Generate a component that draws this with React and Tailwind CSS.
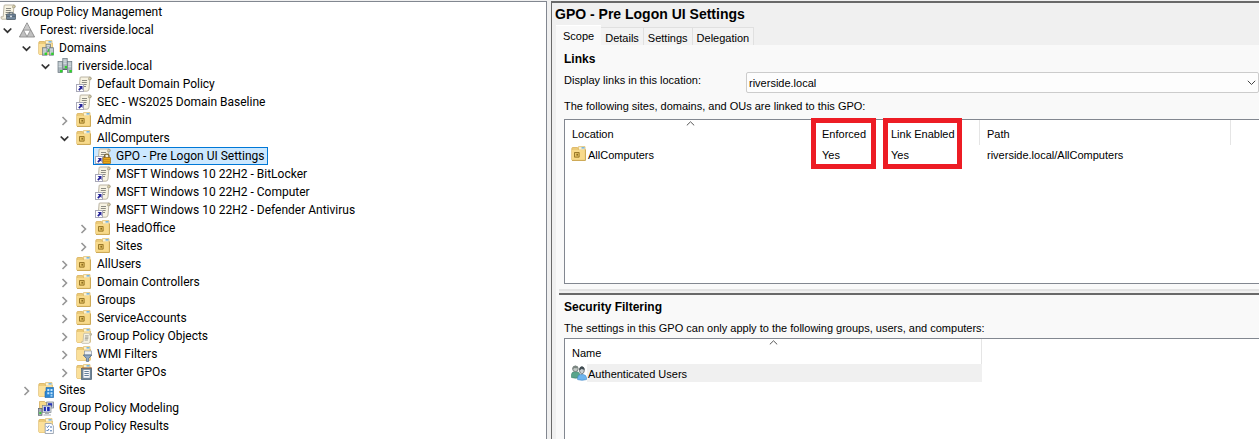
import React, { useState } from "react";

const Svg = ({ children }) => (
  <svg width="16" height="16" viewBox="0 0 16 16" className="block shrink-0" aria-hidden="true">
    {children}
  </svg>
);

const FolderShape = () => (
  <>
    <path d="M.8 2.5 Q.8 1.5 1.8 1.5 H6.5 L7.5 3 H13.5 Q14.5 3 14.5 4 V13.5 Q14.5 14.5 13.5 14.5 H1.8 Q.8 14.5 .8 13.5Z" fill="#eccb79" stroke="#d9b05a" strokeWidth=".8" />
    <path d="M7.5 .6 h6.5 v3.4 h-6.5z" fill="#fdf3d2" stroke="#dcb75f" strokeWidth=".7" />
    <rect x="10.5" y="1.2" width="3" height="1.3" fill="#5aa9e6" />
    <path d="M.9 4 H14.4 V13.4 Q14.4 14.4 13.4 14.4 H1.9 Q.9 14.4 .9 13.4Z" fill="#fbe09a" />
  </>
);

const Scroll = () => (
  <>
    <path d="M4.5 1 H14 Q15.5 1 15.2 3 L13.8 3.6 L13 13 Q12.8 15.2 10.8 15.2 H2 Q.8 15 1 12.8 H3.2 L4 3 Q4 1.5 4.5 1Z" fill="#f7f3e2" stroke="#b3ad9b" strokeWidth=".9" />
    <path d="M13 1.4 Q12.2 2.4 12.6 3.8 L15 3.6 Q15.4 1.2 14 1Z" fill="#d9cfa9" stroke="#8f8973" strokeWidth=".5" />
    <path d="M6 4.5h5M5.8 6.5h5M5.6 8.5h5M5.4 10.5h4.6" stroke="#8b8b83" strokeWidth="1" />
  </>
);

const ShortcutArrow = () => (
  <>
    <rect x=".5" y="8.5" width="7" height="7" fill="#fff" stroke="#a9a9b8" />
    <path d="M2.6 10h3.9v3.9L5.4 12.8l-1.9 1.9-1.3-1.3 1.9-1.9z" fill="#26249a" />
  </>
);

const Tower = ({ x, y, h }) => (
  <>
    <rect x={x} y={y} width="4.4" height={h} fill="#a9b4ba" stroke="#6b7880" strokeWidth=".7" />
    <path d={`M${x + 0.6} ${y + 1.5}h3.2M${x + 0.6} ${y + 3.3}h3.2M${x + 0.6} ${y + 5.1}h3.2`} stroke="#e6edf0" strokeWidth=".8" />
    <rect x={x + 2} y={y + h - 2.6} width="2.4" height="2.4" fill="#2fd32b" />
  </>
);

const icons = {
  console: (
    <Svg>
      <Scroll />
      <rect x="6.5" y="10" width="9" height="5.5" rx=".6" fill="#71869a" stroke="#42515f" strokeWidth=".7" />
      <path d="M9.2 10v-1.6h3.6v1.6M6.7 12.3h8.6" fill="none" stroke="#4b5a68" strokeWidth=".8" />
      <rect x="10.1" y="11.6" width="1.8" height="1.6" fill="#e4e9ee" />
    </Svg>
  ),
  forest: (
    <Svg>
      <path d="M8 .8 15.6 15H.4Z" fill="#a4a4a4" stroke="#808080" strokeWidth=".8" />
      <path d="M8 1.5 11.3 7.8H4.7Z" fill="#c9c9c9" />
      <path d="M4.6 8.2h6.8L8 14.4Z" fill="#fff" stroke="#858585" strokeWidth=".6" />
      <path d="M4.3 8.8 7.2 14.4H1.3ZM11.7 8.8 14.7 14.4H8.8Z" fill="#c0c0c0" />
    </Svg>
  ),
  domains: (
    <Svg>
      <FolderShape />
      <Tower x={8} y={4.2} h={7.5} />
      <Tower x={4.6} y={7.7} h={7.5} />
      <Tower x={11.2} y={7.7} h={7.5} />
    </Svg>
  ),
  domain: (
    <Svg>
      <Tower x={5.8} y={0.6} h={10} />
      <Tower x={1} y={3.6} h={11} />
      <Tower x={10.4} y={3.6} h={11} />
      <path d="M5.8 11.5h4.2" stroke="#59666e" />
    </Svg>
  ),
  gpo: (
    <Svg>
      <Scroll />
      <ShortcutArrow />
    </Svg>
  ),
  gpoLock: (
    <Svg>
      <Scroll />
      <ShortcutArrow />
      <path d="M9.6 10V8q0-1.9 2.2-1.9T14 8v2" fill="none" stroke="#7c6a38" strokeWidth="1.3" />
      <rect x="8" y="9.5" width="7.6" height="6" rx=".5" fill="#e9a91c" stroke="#93640c" strokeWidth=".7" />
      <path d="M8.6 11.5h6.4M8.6 13.4h6.4" stroke="#b87c10" strokeWidth=".6" />
    </Svg>
  ),
  ou: (
    <Svg>
      <FolderShape />
      <path d="M.9 4 H14.4 V14.2 H.9Z" fill="#f8da8b" />
      <path d="M1 14.4h13.4V4" fill="none" stroke="#c09a45" strokeWidth=".8" />
      <rect x="3" y="6" width="5.6" height="5.6" fill="#e8c566" />
      <path d="M3.5 6.5h4.6v4.6H3.5z" fill="none" stroke="#9b7a2c" />
      <rect x="5.4" y="7.8" width="1.6" height="1.8" fill="#8c6b1f" />
    </Svg>
  ),
  gpoFolder: (
    <Svg>
      <FolderShape />
      <g transform="translate(4.8 4.6) scale(.71)">
        <Scroll />
      </g>
    </Svg>
  ),
  wmi: (
    <Svg>
      <FolderShape />
      <rect x="8.5" y="5" width="7" height="4" fill="#eef1f4" stroke="#8a93a0" strokeWidth=".7" />
      <path d="M7.2 9h8.6l-3.1 3.4v3h-2.3v-3z" fill="#90a8c4" stroke="#46617f" strokeWidth=".7" />
    </Svg>
  ),
  starter: (
    <Svg>
      <FolderShape />
      <rect x="5.6" y="4.6" width="10" height="10.9" fill="#6f8497" stroke="#4a6074" strokeWidth=".7" />
      <rect x="7.4" y="5.8" width="6.4" height="8" fill="#f7f8fa" />
      <path d="M8.4 7.5h4.4M8.4 9.5h4.4M8.4 11.5h4.4" stroke="#54728f" strokeWidth=".9" />
      <path d="M6 3.9h10" stroke="#9c5a34" strokeWidth=".8" />
    </Svg>
  ),
  sites: (
    <Svg>
      <FolderShape />
      <path d="M8 5.5h7.6v10H7V9.5h1z" fill="#2b86d2" stroke="#1763ab" strokeWidth=".6" />
      <path d="M9.3 7h2v2h-2zM12.5 7h2v2h-2zM9.3 10.2h2v2h-2zM12.5 10.2h2v2h-2zM12.5 13.2h2v1.4h-2z" fill="#c6e5fb" />
    </Svg>
  ),
  modeling: (
    <Svg>
      <path d="M1.5 1.5h5l1 1h5v7h-11z" fill="#f7da8a" stroke="#c99b3c" strokeWidth=".6" />
      <rect x="8.8" y="2" width="6.6" height="6" fill="#d9dde2" stroke="#6b7480" strokeWidth=".7" />
      <rect x="10" y="3.2" width="4.2" height="3.4" fill="#2433b8" />
      <rect x="4.5" y="5.5" width="8.5" height="7" fill="#dde1e6" stroke="#7d8691" strokeWidth=".7" />
      <rect x="5.8" y="6.8" width="5.9" height="4.4" fill="#1c2ab0" />
      <path d="M8.5 7v4" stroke="#dfe6ff" strokeWidth="1.2" />
      <path d="M7 13.3h4M5.5 15h7.5" stroke="#a3abb4" strokeWidth="1.2" />
      <rect x=".6" y="8.5" width="3.4" height="6.8" fill="#a4adb3" stroke="#58636b" strokeWidth=".7" />
      <rect x="1.4" y="12" width="1.8" height="2" fill="#35d035" />
    </Svg>
  ),
  results: (
    <Svg>
      <FolderShape />
      <path d="M7.2 5.5h6l2.2 2.2v7.8H7.2z" fill="#fdfdff" stroke="#8c97a5" strokeWidth=".8" />
      <path d="M8.5 8.5l1 1 1.6-2M8.5 12l1 1 1.6-2M12 9h2M12 12.8h2" fill="none" stroke="#3569ad" strokeWidth=".9" />
    </Svg>
  ),
  users: (
    <Svg>
      <path d="M.5 12.5V9.5q.2-2.6 3-2.8h2.4Q8.6 7.1 8.8 9.5v3q-4 1.4-8.3 0Z" fill="#5aa58b" stroke="#3b7c68" strokeWidth=".6" />
      <circle cx="4.4" cy="3.8" r="2.8" fill="#c3cac7" stroke="#66706c" strokeWidth=".8" />
      <path d="M1.6 4q.2-3 3-3.2 2.4.2 2.6 2.4Q4 3.4 3.4 3 3 4 1.6 4Z" fill="#7b8681" />
      <path d="M6.6 14.6v-2q.4-2.8 3-3h2.9q2.6.3 3 3v2q-4.4 1.4-8.9 0Z" fill="#6db4ee" stroke="#3f87c6" strokeWidth=".6" />
      <path d="M8.4 4.5q.5-2.6 2.5-2.8 2.3.3 2.5 2.8.2 3.6-2.5 4.6-2.7-1-2.5-4.6Z" fill="#c9cfd2" stroke="#4c565c" strokeWidth=".7" />
      <path d="M8.2 5q.2-3.2 2.7-3.4 2.5.3 2.7 3.2-2.2 0-2.8-1-1 1.2-2.6 1.2Z" fill="#3f4a50" />
    </Svg>
  ),
};

const policy = (label, icon = "gpo") => ({ label, icon });
const ou = (label, icon = "ou") => ({ label, icon, children: [] });

const tree = {
  label: "Forest: riverside.local",
  icon: "forest",
  open: true,
  children: [
    {
      label: "Domains",
      icon: "domains",
      open: true,
      children: [
        {
          label: "riverside.local",
          icon: "domain",
          open: true,
          children: [
            policy("Default Domain Policy"),
            policy("SEC - WS2025 Domain Baseline"),
            ou("Admin"),
            {
              label: "AllComputers",
              icon: "ou",
              open: true,
              children: [
                policy("GPO - Pre Logon UI Settings", "gpoLock"),
                policy("MSFT Windows 10 22H2 - BitLocker"),
                policy("MSFT Windows 10 22H2 - Computer"),
                policy("MSFT Windows 10 22H2 - Defender Antivirus"),
                ou("HeadOffice"),
                ou("Sites"),
              ],
            },
            ou("AllUsers"),
            ou("Domain Controllers"),
            ou("Groups"),
            ou("ServiceAccounts"),
            ou("Group Policy Objects", "gpoFolder"),
            ou("WMI Filters", "wmi"),
            ou("Starter GPOs", "starter"),
          ],
        },
      ],
    },
    ou("Sites", "sites"),
    policy("Group Policy Modeling", "modeling"),
    policy("Group Policy Results", "results"),
  ],
};

function TreeNode({ node, selected, onSelect }) {
  const [open, setOpen] = useState(Boolean(node.open));
  const isSelected = selected === node.label;
  return (
    <li>
      <div className="flex h-[18px] items-center">
        <span className="flex w-[17px] shrink-0">
          {node.children && (
            <button type="button" aria-label={`Toggle ${node.label}`} aria-expanded={open} onClick={() => setOpen(!open)}>
              <svg width="15" height="16" viewBox="0 0 15 16" className="block" aria-hidden="true">
                {open ? (
                  <path d="M3.7 6.5 7.5 10.2l3.8-3.7" fill="none" stroke="#333" strokeWidth="1.7" />
                ) : (
                  <path d="M5.5 5l4 4-4 4" fill="none" stroke="#969696" strokeWidth="1.6" />
                )}
              </svg>
            </button>
          )}
        </span>
        <button
          type="button"
          onClick={() => onSelect(node.label)}
          className={`flex h-[18px] items-center gap-[5px] border pl-px pr-[3px] whitespace-nowrap ${
            isSelected ? "border-[#0078d7] bg-[#cce8ff]" : "border-transparent"
          }`}
        >
          {icons[node.icon]}
          {node.label}
        </button>
      </div>
      {open && node.children && node.children.length > 0 && (
        <ul className="pl-[19px]">
          {node.children.map((child) => (
            <TreeNode key={child.label} node={child} selected={selected} onSelect={onSelect} />
          ))}
        </ul>
      )}
    </li>
  );
}

const SortMark = () => (
  <svg width="9" height="5" viewBox="0 0 9 5" className="absolute top-px left-1/2 -ml-1" aria-hidden="true">
    <path d="M.8 4.4 4.5.8l3.7 3.6" fill="none" stroke="#555" />
  </svg>
);

const headCell = "relative h-[25px] border-r border-[#e5e5e5] pt-0.5 pl-[7px] text-left font-normal whitespace-nowrap";
const bodyCell = "h-[18px] pt-0.5 pl-[7px] whitespace-nowrap";
const iconCell = "h-[18px] pl-1.5 whitespace-nowrap";

export default function App() {
  const [selected, setSelected] = useState("GPO - Pre Logon UI Settings");
  const [tab, setTab] = useState("Scope");
  return (
    <div className="flex min-h-screen bg-[#f0f0f0] pt-px text-black">
      <nav
        aria-label="Console tree"
        className="w-[547px] shrink-0 overflow-hidden border-t border-r border-[#828790] bg-white pt-px font-[Roboto,'Noto_Sans',sans-serif] text-[12px] leading-[16px]"
      >
        <button type="button" className="flex h-[18px] items-center gap-[5px] whitespace-nowrap">
          {icons.console}
          Group Policy Management
        </button>
        <ul>
          <TreeNode node={tree} selected={selected} onSelect={setSelected} />
        </ul>
      </nav>

      <main className="ml-1 flex min-w-0 flex-1 flex-col overflow-hidden border-t-2 border-l border-[#696969] font-['Liberation_Sans',Arial,sans-serif] text-[11px] leading-[14px]">
        <h1 className="pt-px pl-[3px] text-[14px] leading-5 font-bold">GPO - Pre Logon UI Settings</h1>
        <div role="tablist" className="flex items-end pt-px pl-1">
          {["Scope", "Details", "Settings", "Delegation"].map((name) => (
            <button
              key={name}
              type="button"
              role="tab"
              aria-selected={tab === name}
              onClick={() => setTab(name)}
              className={
                tab === name
                  ? "h-5 border-t border-white bg-[#f9f9f9] px-[7px]"
                  : "h-[18px] border-t border-r border-[#e0e0e0] bg-[#f3f3f3] px-1 pt-0.5"
              }
            >
              {name}
            </button>
          ))}
        </div>

        <div className="ml-1 flex flex-1 flex-col bg-[#f9f9f9] pt-1.5">
          <section className="pl-2">
            <h2 className="text-[12px] leading-4 font-bold">Links</h2>
            <div className="mt-[5px] flex h-5 items-center">
              <label htmlFor="location" className="w-[182px] shrink-0 pb-1">
                Display links in this location:
              </label>
              <div className="relative flex-1">
                <select
                  id="location"
                  className="block h-[21px] w-full appearance-none rounded-xs border border-[#cccccc] bg-[#fdfdfd] px-0.5 pt-0.5"
                >
                  <option>riverside.local</option>
                </select>
                <svg width="9" height="6" viewBox="0 0 9 6" className="pointer-events-none absolute top-2 right-[3px]" aria-hidden="true">
                  <path d="M.8 .8 4.5 4.5 8.2 .8" fill="none" stroke="#444" />
                </svg>
              </div>
            </div>
            <p className="mt-[7px] whitespace-nowrap">The following sites, domains, and OUs are linked to this GPO:</p>
            <div className="relative mt-1.5 h-[165px] border border-r-0 border-[#828790] bg-white">
              <table className="w-[666px] table-fixed border-separate border-spacing-0">
                <colgroup>
                  <col className="w-[250px]" />
                  <col className="w-[69px]" />
                  <col className="w-[96px]" />
                  <col className="w-[251px]" />
                </colgroup>
                <thead>
                  <tr>
                    <th className={headCell}>
                      Location
                      <SortMark />
                    </th>
                    <th className={headCell}>Enforced</th>
                    <th className={headCell}>Link Enabled</th>
                    <th className={headCell}>Path</th>
                  </tr>
                </thead>
                <tbody>
                  <tr>
                    <td className={iconCell}>
                      <span className="flex items-center">
                        {icons.ou}
                        <span className="pt-0.5 pl-px">AllComputers</span>
                      </span>
                    </td>
                    <td className={bodyCell}>Yes</td>
                    <td className={bodyCell}>Yes</td>
                    <td className={bodyCell}>riverside.local/AllComputers</td>
                  </tr>
                </tbody>
              </table>
              <div className="pointer-events-none absolute -top-0.5 left-[246px] h-[51px] w-[65px] border-[5px] border-[#ed1c24]" />
              <div className="pointer-events-none absolute -top-0.5 left-[318px] h-[51px] w-[79px] border-[5px] border-[#ed1c24]" />
            </div>
          </section>

          <div className="mt-[5px] ml-[3px] h-[6px] border-t-2 border-b-2 border-t-[#e3e3e3] border-b-[#696969] bg-[#f0f0f0]" />

          <section className="flex flex-1 flex-col pt-1 pl-2">
            <h2 className="text-[12px] leading-4 font-bold">Security Filtering</h2>
            <p className="mt-1.5 whitespace-nowrap">
              The settings in this GPO can only apply to the following groups, users, and computers:
            </p>
            <div className="mt-[3px] flex-1 border border-r-0 border-b-0 border-[#828790] bg-white">
              <table className="w-[417px] table-fixed border-separate border-spacing-0">
                <thead>
                  <tr>
                    <th className={headCell}>
                      Name
                      <SortMark />
                    </th>
                  </tr>
                </thead>
                <tbody>
                  <tr>
                    <td className={iconCell}>
                      <span className="flex items-center">
                        {icons.users}
                        <span className="h-[18px] flex-1 bg-[#f0f0f0] pt-0.5 pl-px leading-4">Authenticated Users</span>
                      </span>
                    </td>
                  </tr>
                </tbody>
              </table>
            </div>
          </section>
        </div>
      </main>
    </div>
  );
}
